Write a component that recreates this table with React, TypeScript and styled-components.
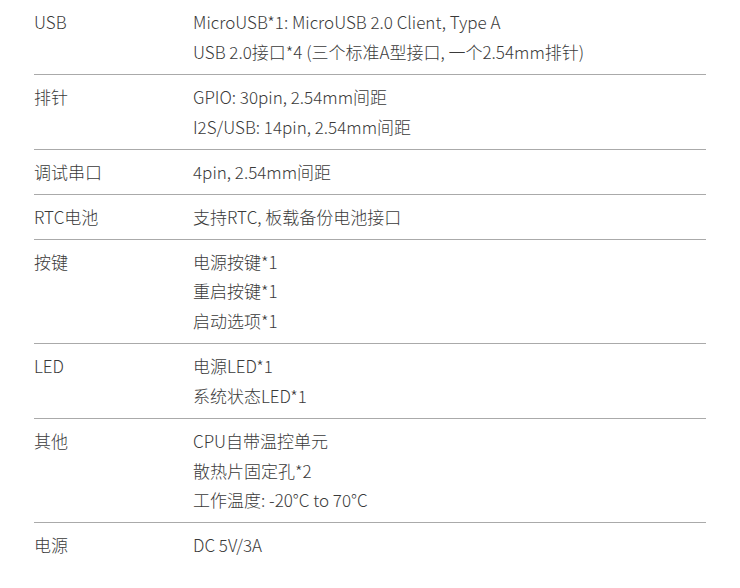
import React from "react";
import styled, { createGlobalStyle } from "styled-components";

const Global = createGlobalStyle`
  html, body { margin: 0; padding: 0; background: #fff; }
  body { font-family: "Noto Sans CJK SC", "Source Han Sans SC", "Noto Sans", sans-serif; }
`;

const Table = styled.div`
  margin: 0 34px;
  width: 672px;
  display: flex;
  flex-direction: column;
`;

const Row = styled.div<{ $last?: boolean }>`
  display: grid;
  grid-template-columns: 159px 1fr;
  padding: 7.125px 0;
  border-bottom: ${(p) => (p.$last ? "none" : "1px solid #aaaaaa")};
`;

const Label = styled.div`
  font-size: 17px;
  line-height: 1.75;
  font-weight: 300;
  color: #3a3a3a;
`;

const Values = styled.div`
  display: flex;
  flex-direction: column;
`;

const Line = styled.div`
  font-size: 17px;
  line-height: 1.75;
  font-weight: 300;
  color: #3a3a3a;
  white-space: nowrap;
`;

const rows: { label: string; values: string[] }[] = [
  {
    label: "USB",
    values: [
      "MicroUSB*1: MicroUSB 2.0 Client, Type A",
      "USB 2.0接口*4 (三个标准A型接口, 一个2.54mm排针)",
    ],
  },
  { label: "排针", values: ["GPIO: 30pin, 2.54mm间距", "I2S/USB: 14pin, 2.54mm间距"] },
  { label: "调试串口", values: ["4pin, 2.54mm间距"] },
  { label: "RTC电池", values: ["支持RTC, 板载备份电池接口"] },
  { label: "按键", values: ["电源按键*1", "重启按键*1", "启动选项*1"] },
  { label: "LED", values: ["电源LED*1", "系统状态LED*1"] },
  { label: "其他", values: ["CPU自带温控单元", "散热片固定孔*2", "工作温度: -20°C to 70°C"] },
  { label: "电源", values: ["DC 5V/3A"] },
];

export default function App() {
  return (
    <>
      <Global />
      <Table>
        {rows.map((r, i) => (
          <Row key={r.label} $last={i === rows.length - 1}>
            <Label>{r.label}</Label>
            <Values>
              {r.values.map((v) => (
                <Line key={v}>{v}</Line>
              ))}
            </Values>
          </Row>
        ))}
      </Table>
    </>
  );
}
